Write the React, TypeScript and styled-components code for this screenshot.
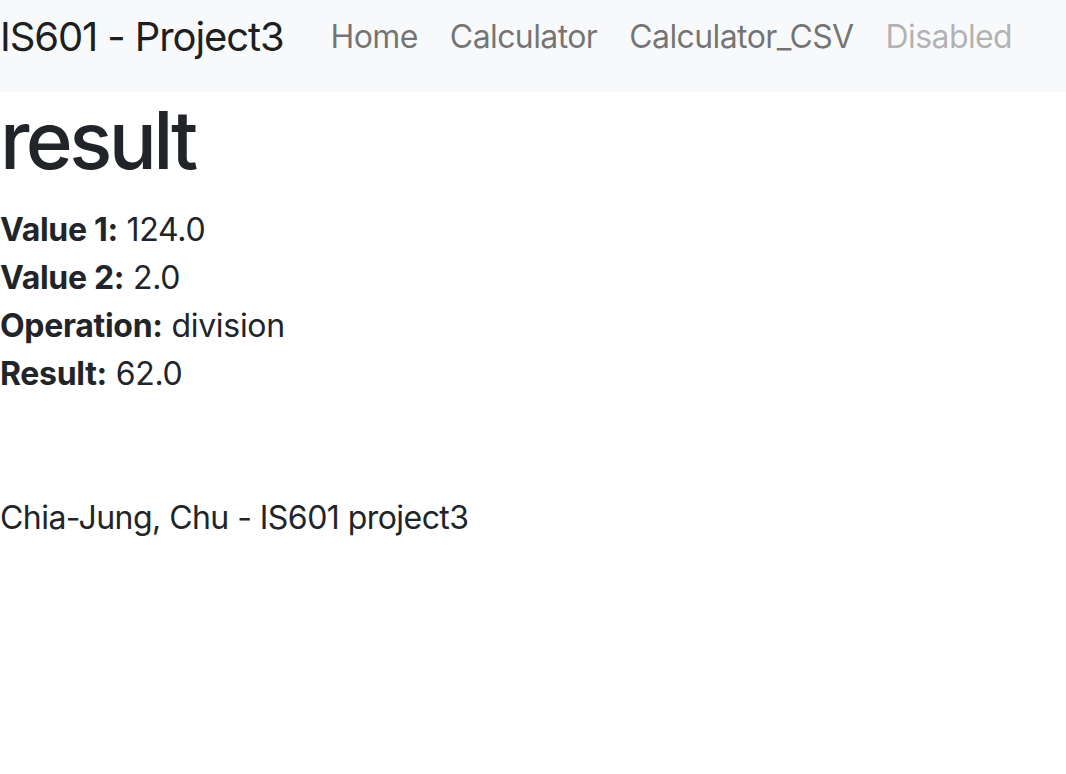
import React from "react";
import styled, { createGlobalStyle } from "styled-components";

const GlobalStyle = createGlobalStyle`
  html, body {
    margin: 0;
    padding: 0;
    background: #ffffff;
  }
  body {
    font-family: Inter, "Noto Sans", "Liberation Sans", sans-serif;
    color: #212529;
    font-size: 32px;
    line-height: 48px;
  }
`;

const Navbar = styled.nav`
  display: flex;
  align-items: flex-start;
  height: 92px;
  box-sizing: border-box;
  padding-top: 7px;
  background: #f8f9fa;
`;

const Brand = styled.a`
  font-size: 40px;
  line-height: 60px;
  color: rgba(0, 0, 0, 0.9);
  text-decoration: none;
  margin-right: 31px;
  letter-spacing: -1.1px;
  white-space: nowrap;
`;

const NavList = styled.ul`
  display: flex;
  list-style: none;
  margin: 0;
  padding: 0;
`;

const NavLink = styled.a<{ $disabled?: boolean }>`
  display: block;
  padding: 6px 16px;
  font-size: 32px;
  line-height: 48px;
  letter-spacing: -0.6px;
  text-decoration: none;
  white-space: nowrap;
  color: ${(p) => (p.$disabled ? "rgba(0, 0, 0, 0.3)" : "rgba(0, 0, 0, 0.55)")};
`;

const Main = styled.main`
  display: flex;
  flex-direction: column;
`;

const Title = styled.h1`
  margin: 0 0 18px;
  font-size: 80px;
  line-height: 96px;
  font-weight: 500;
  letter-spacing: -3.6px;
`;

const Details = styled.div`
  display: flex;
  flex-direction: column;
`;

const Line = styled.div`
  font-size: 32px;
  line-height: 48px;
  letter-spacing: -0.3px;
`;

const Label = styled.b`
  font-weight: 700;
`;

const Footer = styled.footer`
  margin-top: 96px;
  font-size: 32px;
  line-height: 48px;
  letter-spacing: -0.55px;
`;

const links = [
  { label: "Home" },
  { label: "Calculator" },
  { label: "Calculator_CSV" },
  { label: "Disabled", disabled: true },
];

const rows = [
  { label: "Value 1:", value: "124.0" },
  { label: "Value 2:", value: "2.0" },
  { label: "Operation:", value: "division" },
  { label: "Result:", value: "62.0" },
];

export default function App() {
  return (
    <>
      <GlobalStyle />
      <Navbar>
        <Brand href="#">IS601 - Project3</Brand>
        <NavList>
          {links.map((l) => (
            <li key={l.label}>
              <NavLink href="#" $disabled={l.disabled}>
                {l.label}
              </NavLink>
            </li>
          ))}
        </NavList>
      </Navbar>
      <Main>
        <Title>result</Title>
        <Details>
          {rows.map((r) => (
            <Line key={r.label}>
              <Label>{r.label}</Label> {r.value}
            </Line>
          ))}
        </Details>
        <Footer>Chia-Jung, Chu - IS601 project3</Footer>
      </Main>
    </>
  );
}
